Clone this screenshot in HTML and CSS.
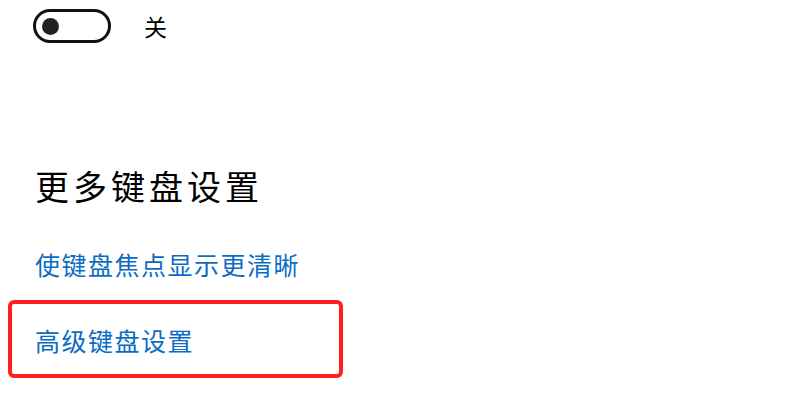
FILE: index.html
```html
<!DOCTYPE html>
<html>
  <head>
    <meta charset="UTF-8">
    <title>键盘设置</title>
    <link rel="stylesheet" href="styles.css">
  </head>
  <body>
    <div class="page">
      <div class="toggle-row">
        <span class="toggle"><span class="knob"></span></span>
        <span class="toggle-label">关</span>
      </div>

      <h2 class="section-title">更多键盘设置</h2>

      <a class="link" href="#">使键盘焦点显示更清晰</a>
      <div class="highlight">
        <a class="link" href="#">高级键盘设置</a>
      </div>
    </div>
  </body>
</html>
```

FILE: styles.css
```css
body {
  margin: 0;
  padding: 0;
  background: #ffffff;
  font-family: "Noto Sans CJK SC", "Noto Sans", sans-serif;
  color: #000000;
}
.page {
  padding: 9px 0 0 33px;
}
.toggle-row {
  display: flex;
  align-items: center;
  gap: 33px;
  height: 34px;
}
.toggle {
  box-sizing: border-box;
  display: flex;
  align-items: center;
  width: 78px;
  height: 34px;
  border: 3px solid #111111;
  border-radius: 17px;
  padding-left: 6px;
}
.knob {
  width: 17px;
  height: 17px;
  border-radius: 50%;
  background: #222222;
}
.toggle-label {
  font-size: 23px;
}
.section-title {
  margin: 121px 0 0 2px;
  font-size: 34px;
  font-weight: normal;
  line-height: 44px;
  letter-spacing: 4px;
}
.link {
  display: block;
  margin-left: 2px;
  color: #0b6cc4;
  text-decoration: none;
  font-size: 25px;
  line-height: 32px;
  letter-spacing: 1.5px;
}
.section-title + .link {
  margin-top: 40px;
}
.highlight {
  box-sizing: border-box;
  width: 335px;
  height: 78px;
  margin: 20px 0 0 -25px;
  padding: 20px 0 0 21px;
  border: 4px solid #ff1f1f;
  border-radius: 6px;
}
```
